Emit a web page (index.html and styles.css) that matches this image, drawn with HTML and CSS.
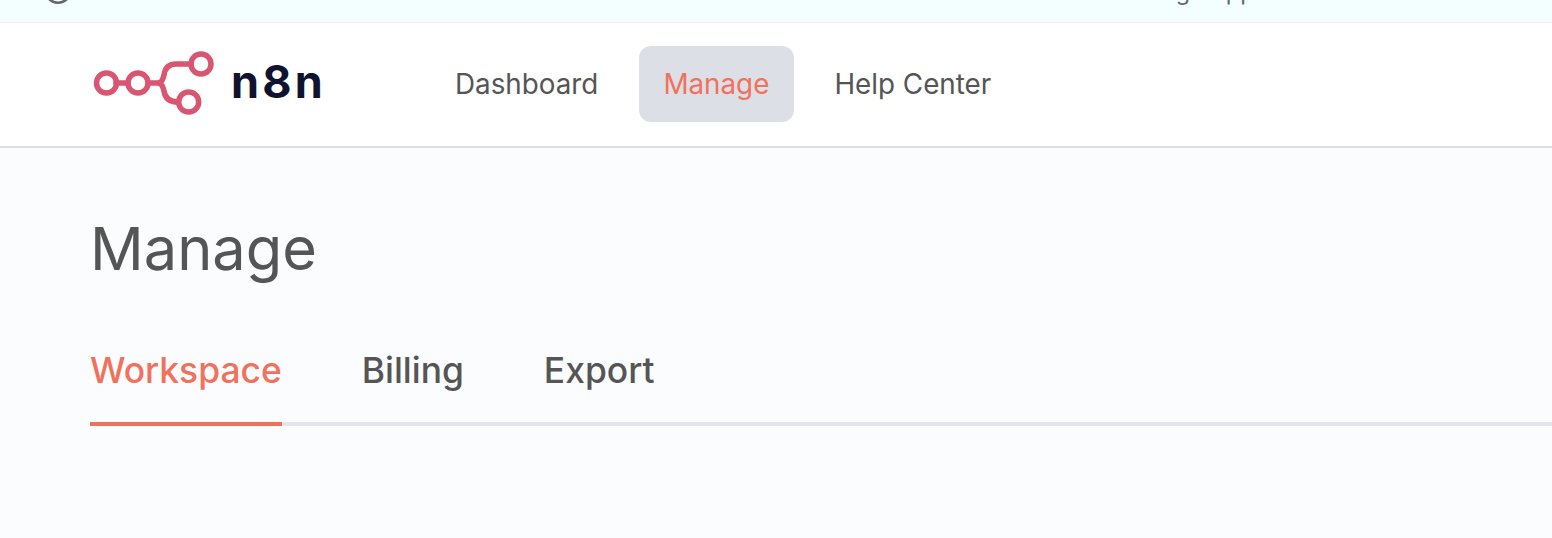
FILE: index.html
```html
<!DOCTYPE html>
<html lang="en">
<head>
    <meta charset="UTF-8">
    <title>Manage</title>
    <link rel="stylesheet" href="styles.css">
</head>
<body>
    <div class="banner">
        <svg class="banner-icon" width="28" height="28" viewBox="0 0 28 28"><circle cx="14" cy="14" r="12.7" fill="none" stroke="#666" stroke-width="2.6"/></svg>
        <span class="banner-text">Getting Support Channels</span>
    </div>
    <header class="topbar">
        <div class="logo">
            <svg width="130" height="72" viewBox="0 0 130 72">
                <g fill="none" stroke="#d95672" stroke-width="5.5" stroke-linecap="round">
                    <path d="M26 35H38M58 35H67C72 35 73 31 74 27C75 20 79 16 86 16H101M67 35C72 35 73 39 74 43C75 50 79 54 88 54"/>
                    <circle cx="16.5" cy="35" r="10"/>
                    <circle cx="48" cy="35" r="10"/>
                    <circle cx="111" cy="16" r="10"/>
                    <circle cx="98.7" cy="54" r="10"/>
                </g>
            </svg>
            <span class="logo-text">n8n</span>
        </div>
        <nav class="mainnav">
            <a class="navlink">Dashboard</a>
            <a class="navlink active">Manage</a>
            <a class="navlink">Help Center</a>
        </nav>
    </header>
    <main class="content">
        <h1 class="title">Manage</h1>
        <div class="tabs">
            <a class="tab current">Workspace</a>
            <a class="tab">Billing</a>
            <a class="tab">Export</a>
        </div>
    </main>
</body>
</html>
```

FILE: styles.css
```css
html,body{
    height:100%;
}
body{
    margin:0;
    overflow:hidden;
    background:#fbfcfe;
    font-family:Inter,"Liberation Sans",sans-serif;
    color:#555;
    display:flex;
    flex-direction:column;
}
/* the page is scrolled a little, only the bottom of this bar shows */
.banner{
    height:22px;
    flex:none;
    background:#f3ffff;
    border-bottom:1px solid #eef0f2;
    overflow:hidden;
    display:flex;
    justify-content:space-between;
    align-items:flex-start;
    padding:0 156px 0 44px;
    font-size:23.5px;
    line-height:26px;
    color:#666;
}
.banner-icon{
    flex:none;
    margin-top:-24px;
}
.banner-text{
    margin-top:-21px;
    white-space:nowrap;
}
.topbar{
    height:122px;
    padding-bottom:1px;
    flex:none;
    background:#fff;
    border-bottom:2px solid #dcdfe6;
    display:flex;
    align-items:center;
    padding-left:90px;
}
.logo{
    width:340.5px;
    display:flex;
    align-items:center;
    gap:11px;
}
.logo svg{
    width:130px;
    height:72px;
}
.logo-text{
    font-size:45px;
    font-weight:700;
    letter-spacing:3.2px;
    color:#101330;
    padding-bottom:6px;
}
.mainnav{
    display:flex;
    align-items:center;
    gap:16px;
}
.navlink{
    font-size:27.8px;
    padding:0 24.5px;
    height:76px;
    line-height:76px;
    border-radius:12px;
}
.navlink.active{
    background:#dcdfe6;
    color:#f0725c;
}
.content{
    padding:0 0 0 90px;
}
.title{
    margin:60px 0 0;
    font-size:59.5px;
    font-weight:400;
    line-height:80px;
}
.tabs{
    margin-top:62px;
    display:flex;
    gap:80px;
    border-bottom:4px solid #e4e5ea;
}
.tab{
    font-size:35.4px;
    font-weight:500;
    line-height:42px;
    padding-bottom:30px;
    margin-bottom:-4px;
}
.tab.current{
    color:#f0725c;
    border-bottom:4px solid #f0725c;
}
```
